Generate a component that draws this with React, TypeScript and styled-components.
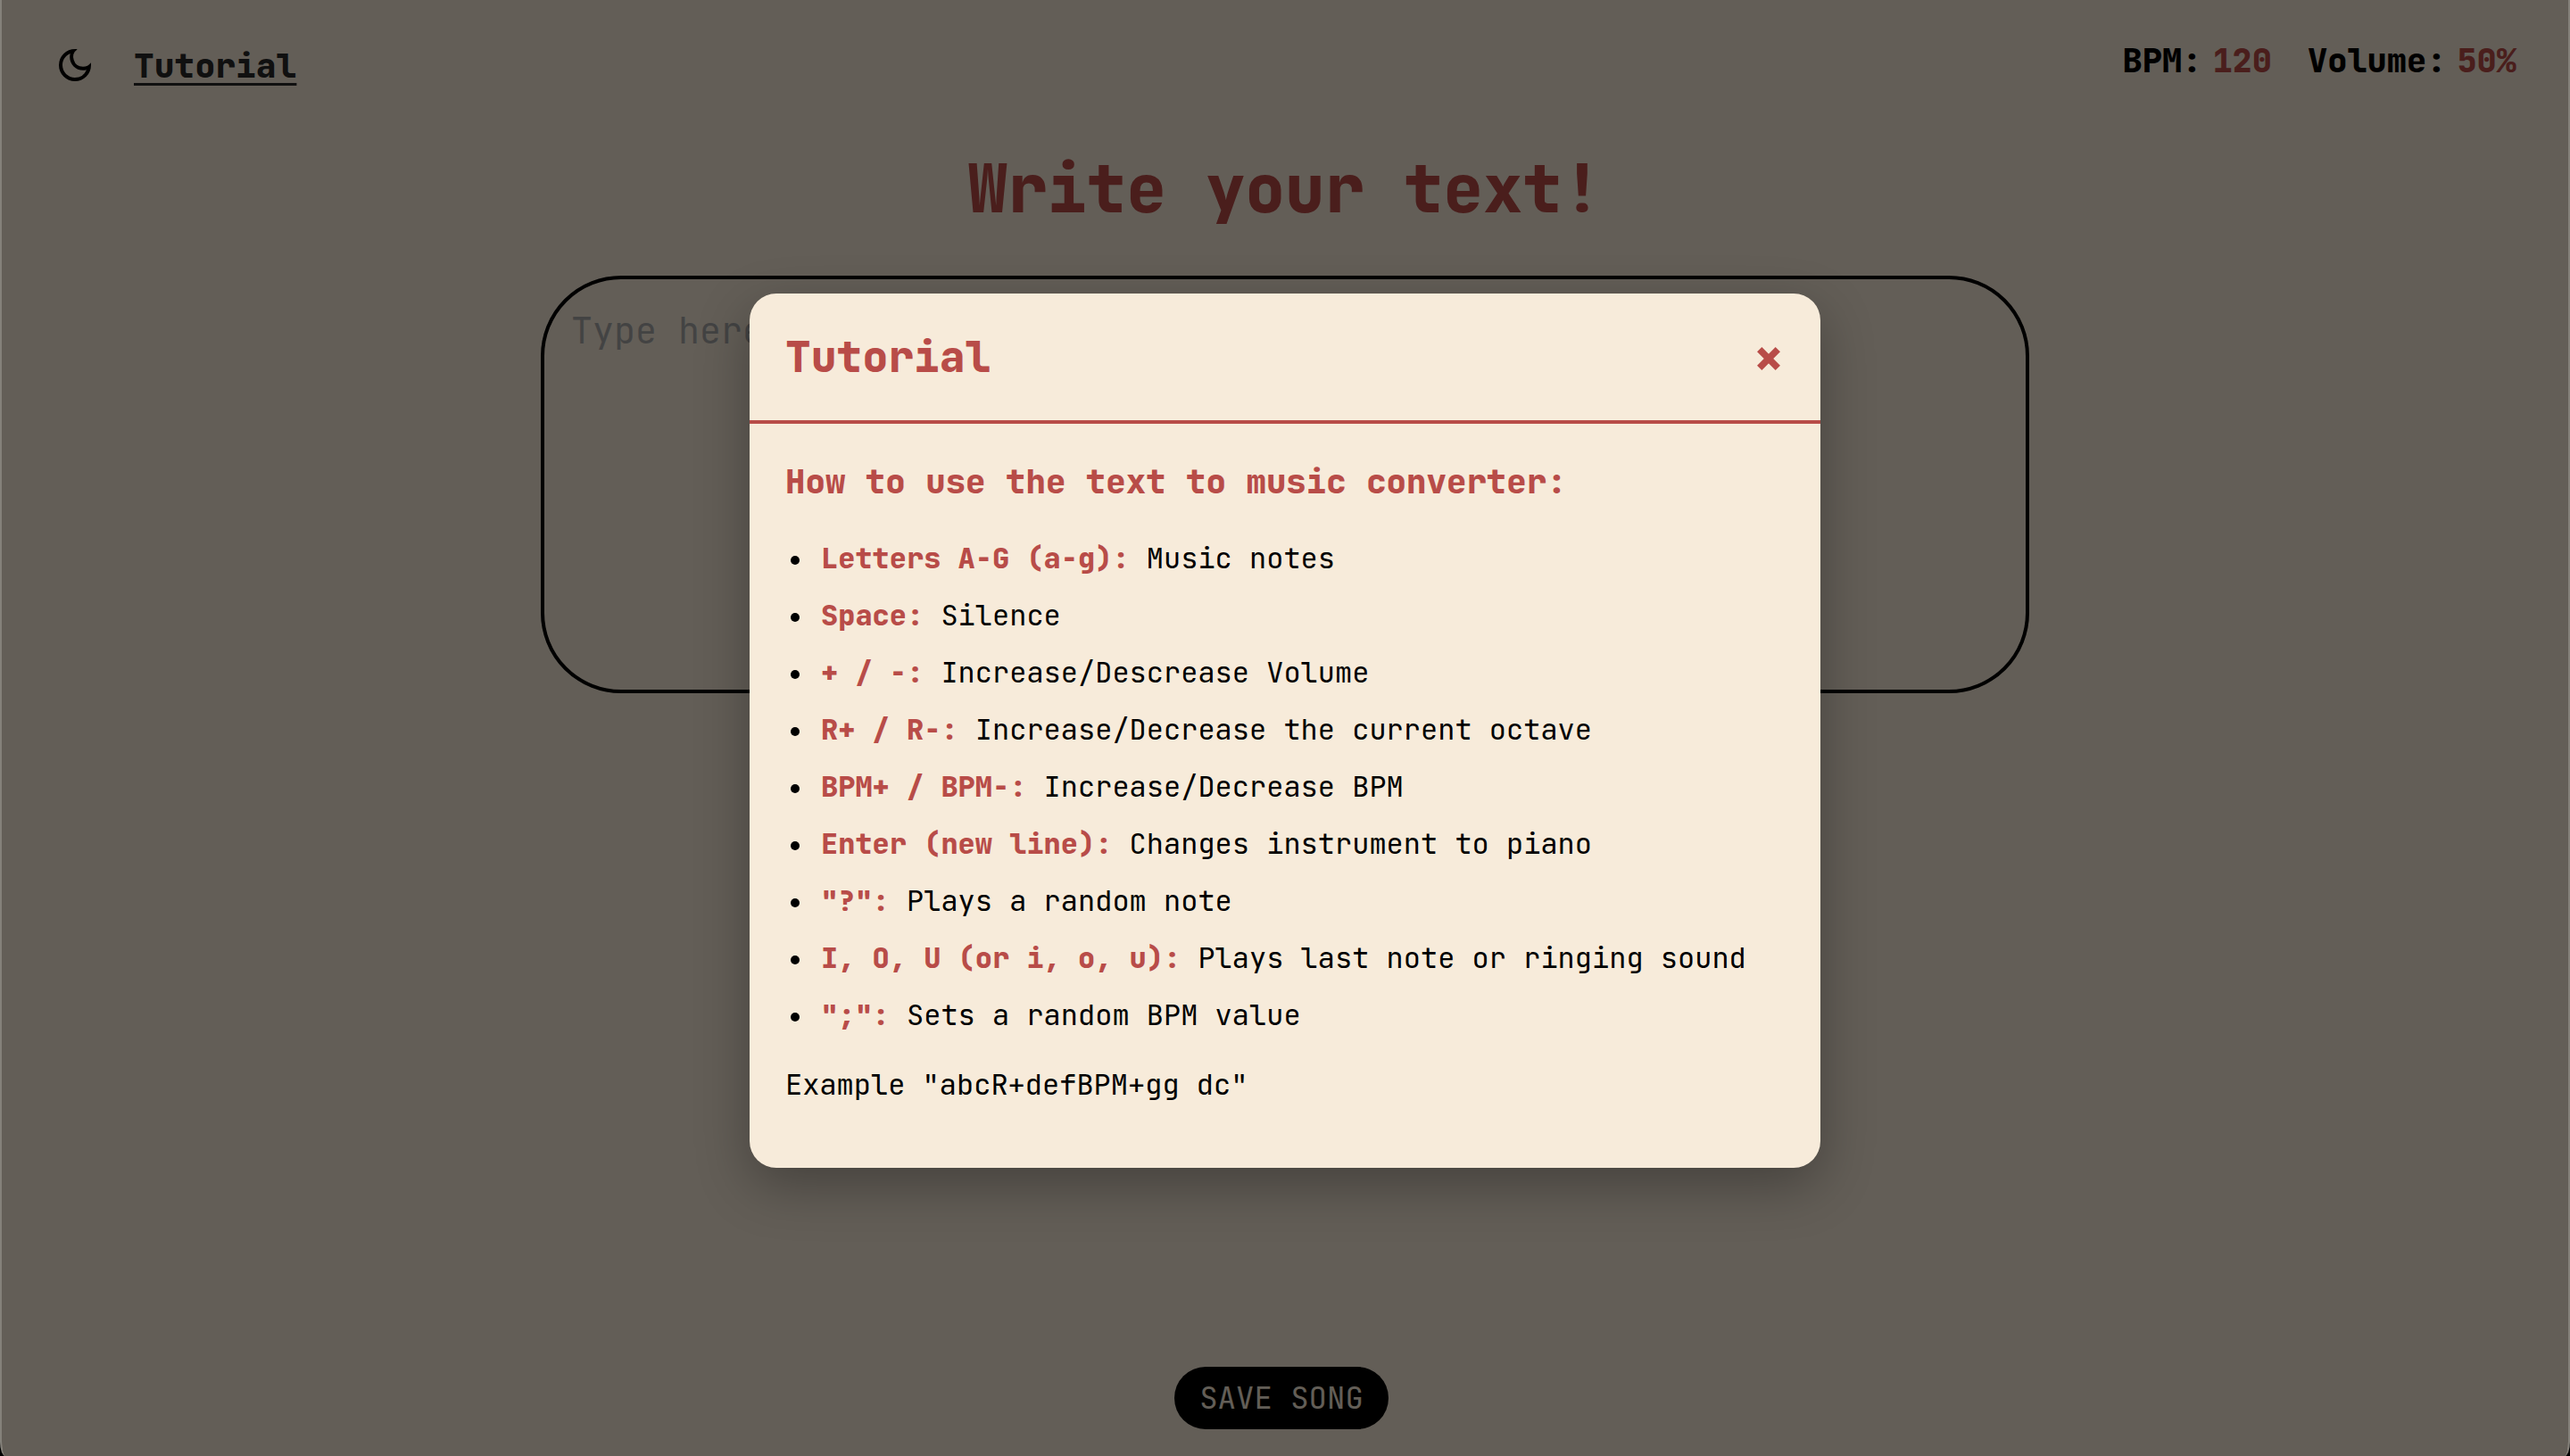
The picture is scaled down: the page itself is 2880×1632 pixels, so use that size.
import React from "react";
import styled, { createGlobalStyle } from "styled-components";
import { MdOutlineDarkMode } from "react-icons/md";

const accent = "#b84c48";
const cream = "#f7ebda";
const mono = `"JetBrains Mono", "DejaVu Sans Mono", monospace`;
const bold = 800;

const GlobalStyle = createGlobalStyle`
  *, *::before, *::after { box-sizing: border-box; }
  html { background: #000; }
  body { margin: 0; font-family: ${mono}; color: #000; }
  button, textarea { font-family: inherit; }
`;

const Window = styled.div`
  position: relative;
  display: flex;
  flex-direction: column;
  min-height: 100vh;
  overflow: hidden;
  background: ${cream};
  border: solid #84817a;
  border-width: 0 2px;
  border-radius: 0 0 6px 6px / 0 0 16px 16px;
`;

const Header = styled.header`
  display: flex;
  justify-content: space-between;
  align-items: flex-start;
  padding: 43px 58px 0;
`;

const Nav = styled.nav`
  display: flex;
  align-items: center;
  gap: 42px;
`;

const ThemeButton = styled.button`
  display: flex;
  padding: 0;
  border: 0;
  background: none;
  color: #000;
  cursor: pointer;
`;

const NavLink = styled.a`
  color: #282828;
  font-size: 38px;
  font-weight: ${bold};
  line-height: 60px;
  text-decoration: underline;
  text-decoration-thickness: 3px;
  text-underline-offset: 6px;
  text-decoration-skip-ink: none;
`;

const Stats = styled.dl`
  display: flex;
  gap: 40px;
  margin: 0;
  font-size: 37px;
  font-weight: ${bold};
  line-height: 50px;
`;

const Stat = styled.div`
  display: flex;
  gap: 12px;
`;

const StatValue = styled.dd`
  margin: 0;
  color: ${accent};
`;

const Main = styled.main`
  display: flex;
  flex-direction: column;
  align-items: center;
  gap: 48px;
  padding-top: 60px;
`;

const Title = styled.h1`
  margin: 0;
  color: ${accent};
  font-size: 74px;
  font-weight: ${bold};
  line-height: 98px;
`;

const TextBox = styled.textarea`
  width: 58%;
  height: 468px;
  padding: 32px 30px;
  border: 4px solid #000;
  border-radius: 90px;
  background: transparent;
  color: #000;
  font-size: 40px;
  line-height: 52px;
  resize: none;

  &::placeholder {
    color: #a9a9a9;
    opacity: 1;
  }
`;

const Footer = styled.footer`
  display: flex;
  justify-content: center;
  margin-top: auto;
  padding: 0 8px 30px 0;
`;

const SaveButton = styled.button`
  padding: 10px 28px;
  border: 0;
  border-radius: 35px;
  background: #000;
  color: ${cream};
  font-size: 34px;
  line-height: 50px;
  cursor: pointer;
`;

const Backdrop = styled.div`
  position: absolute;
  inset: 0;
  display: flex;
  align-items: center;
  justify-content: center;
  padding-top: 6px;
  background: rgba(0, 0, 0, 0.6);
`;

const Dialog = styled.section`
  width: 1200px;
  max-width: 90%;
  border-radius: 30px;
  background: ${cream};
  box-shadow: 0 20px 60px rgba(0, 0, 0, 0.3);
`;

const DialogHeader = styled.header`
  display: flex;
  align-items: center;
  justify-content: space-between;
  padding: 40px;
  border-bottom: 4px solid ${accent};
`;

const DialogTitle = styled.h2`
  margin: 0;
  color: ${accent};
  font-size: 48px;
  font-weight: ${bold};
  line-height: 62px;
`;

const CloseButton = styled.button`
  display: flex;
  padding: 0;
  border: 0;
  background: none;
  color: ${accent};
  cursor: pointer;
`;

const DialogBody = styled.div`
  padding: 40px;
  font-size: 32px;
  line-height: 50px;
`;

const Subtitle = styled.h3`
  margin: 0 0 36px;
  color: ${accent};
  font-weight: ${bold};
`;

const Commands = styled.ul`
  display: flex;
  flex-direction: column;
  gap: 14px;
  margin: 0;
  padding-left: 40px;
  list-style: none;
`;

const CommandItem = styled.li`
  &::before {
    content: "";
    display: inline-block;
    width: 10px;
    height: 10px;
    margin: 0 24px 0 -34px;
    border-radius: 50%;
    background: #000;
    vertical-align: 4px;
  }
`;

const Command = styled.strong`
  color: ${accent};
  font-weight: ${bold};
`;

const Example = styled.p`
  margin: 28px 0;
`;

const commands: [string, string][] = [
  ["Letters A-G (a-g):", "Music notes"],
  ["Space:", "Silence"],
  ["+ / -:", "Increase/Descrease Volume"],
  ["R+ / R-:", "Increase/Decrease the current octave"],
  ["BPM+ / BPM-:", "Increase/Decrease BPM"],
  ["Enter (new line):", "Changes instrument to piano"],
  ['"?":', "Plays a random note"],
  ["I, O, U (or i, o, u):", "Plays last note or ringing sound"],
  ['";":', "Sets a random BPM value"],
];

function CloseIcon() {
  return (
    <svg width="36" height="36" viewBox="0 0 36 36" aria-hidden="true">
      <path d="M7.7 9.7L28.3 30.3M28.3 9.7L7.7 30.3" stroke="currentColor" strokeWidth="7.5" fill="none" />
    </svg>
  );
}

export default function App() {
  return (
    <>
      <GlobalStyle />
      <Window>
        <Header>
          <Nav>
            <ThemeButton type="button" aria-label="Toggle dark mode">
              <MdOutlineDarkMode size={48} />
            </ThemeButton>
            <NavLink href="#tutorial">Tutorial</NavLink>
          </Nav>
          <Stats>
            <Stat>
              <dt>BPM:</dt>
              <StatValue>120</StatValue>
            </Stat>
            <Stat>
              <dt>Volume:</dt>
              <StatValue>50%</StatValue>
            </Stat>
          </Stats>
        </Header>
        <Main>
          <Title id="page-title">Write your text!</Title>
          <TextBox aria-labelledby="page-title" placeholder="Type here..." />
        </Main>
        <Footer>
          <SaveButton type="button">SAVE SONG</SaveButton>
        </Footer>
        <Backdrop>
          <Dialog id="tutorial" role="dialog" aria-modal="true" aria-labelledby="tutorial-title">
            <DialogHeader>
              <DialogTitle id="tutorial-title">Tutorial</DialogTitle>
              <CloseButton type="button" aria-label="Close">
                <CloseIcon />
              </CloseButton>
            </DialogHeader>
            <DialogBody>
              <Subtitle>How to use the text to music converter:</Subtitle>
              <Commands>
                {commands.map(([keys, effect]) => (
                  <CommandItem key={keys}>
                    <Command>{keys}</Command> {effect}
                  </CommandItem>
                ))}
              </Commands>
              <Example>Example "abcR+defBPM+gg dc"</Example>
            </DialogBody>
          </Dialog>
        </Backdrop>
      </Window>
    </>
  );
}
